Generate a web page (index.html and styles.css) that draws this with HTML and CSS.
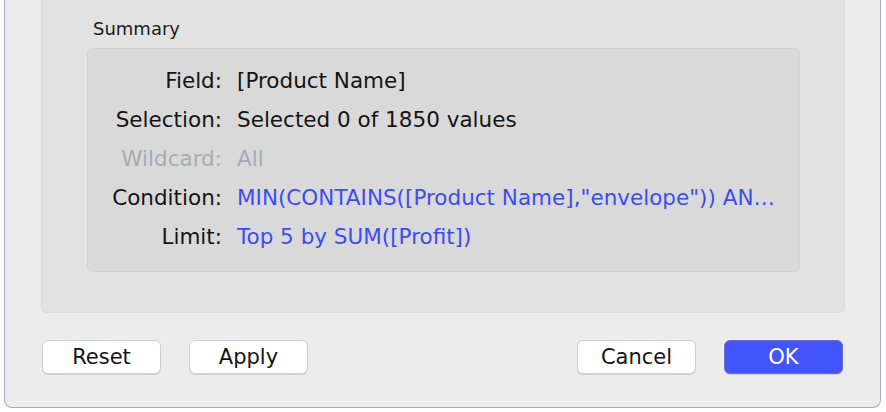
FILE: index.html
```html
<!DOCTYPE html>
<html>
<head>
<meta charset="utf-8">
<link rel="stylesheet" href="styles.css">
</head>
<body>
<div class="window">
  <div class="group">
    <div class="group-title">Summary</div>
    <div class="summary">
      <div class="label">Field:</div><div class="value">[Product Name]</div>
      <div class="label">Selection:</div><div class="value">Selected 0 of 1850 values</div>
      <div class="label dim">Wildcard:</div><div class="value dim">All</div>
      <div class="label">Condition:</div><div class="value link">MIN(CONTAINS([Product Name],"envelope")) AN…</div>
      <div class="label">Limit:</div><div class="value link">Top 5 by SUM([Profit])</div>
    </div>
  </div>
  <div class="buttons">
    <div class="btn-group">
      <button class="btn">Reset</button>
      <button class="btn">Apply</button>
    </div>
    <div class="btn-group">
      <button class="btn">Cancel</button>
      <button class="btn primary">OK</button>
    </div>
  </div>
</div>
</body>
</html>
```
FILE: styles.css
```css
html, body {
  margin: 0;
  padding: 0;
  background: #ffffff;
  font-family: "DejaVu Sans", "Liberation Sans", sans-serif;
}
.window {
  margin-left: 4px;
  width: 875px;
  height: 407px;
  background: #ececec;
  border-left: 1px solid #a9a9c6;
  border-right: 1px solid #a9a9c6;
  border-bottom: 1px solid #a9a9c6;
  border-radius: 0 0 8px 8px;
  display: flex;
  flex-direction: column;
}
.group {
  margin: 0 35px 0 36px;
  height: 313px;
  box-sizing: border-box;
  background: #e2e2e2;
  border: 1px solid #dadada;
  border-top: none;
  border-radius: 0 0 6px 6px;
  padding: 19px 44px 0 45px;
}
.group-title {
  font-size: 18px;
  line-height: 20px;
  color: #1c1c1c;
  padding-left: 6px;
  margin-bottom: 9px;
}
.summary {
  background: #d9d9d9;
  border: 1px solid #d2d2d8;
  border-radius: 5px;
  height: 224px;
  box-sizing: border-box;
  padding-top: 12px;
  display: grid;
  grid-template-columns: 134px 1fr;
  grid-auto-rows: 39px;
  column-gap: 15px;
  align-content: start;
  font-size: 21.5px;
}
.label {
  text-align: right;
  line-height: 39px;
  color: #141414;
  white-space: nowrap;
}
.value {
  line-height: 39px;
  color: #141414;
  white-space: nowrap;
}
.dim { color: #a9a9b7; }
.link { color: #3d4cf2; }
.buttons {
  display: flex;
  justify-content: space-between;
  margin: 27px 37px 0 37px;
}
.btn-group {
  display: flex;
  gap: 28px;
}
.btn {
  width: 119px;
  height: 34px;
  box-sizing: border-box;
  background: #ffffff;
  border: 1px solid #cfcfd6;
  border-radius: 6px;
  font-family: "DejaVu Sans", "Liberation Sans", sans-serif;
  font-size: 21px;
  color: #141414;
  padding: 0;
  box-shadow: 0 1px 0 #d0d0d0;
}
.btn.primary {
  background: #4454fb;
  border-color: #6a70d0;
  color: #ffffff;
}
```
